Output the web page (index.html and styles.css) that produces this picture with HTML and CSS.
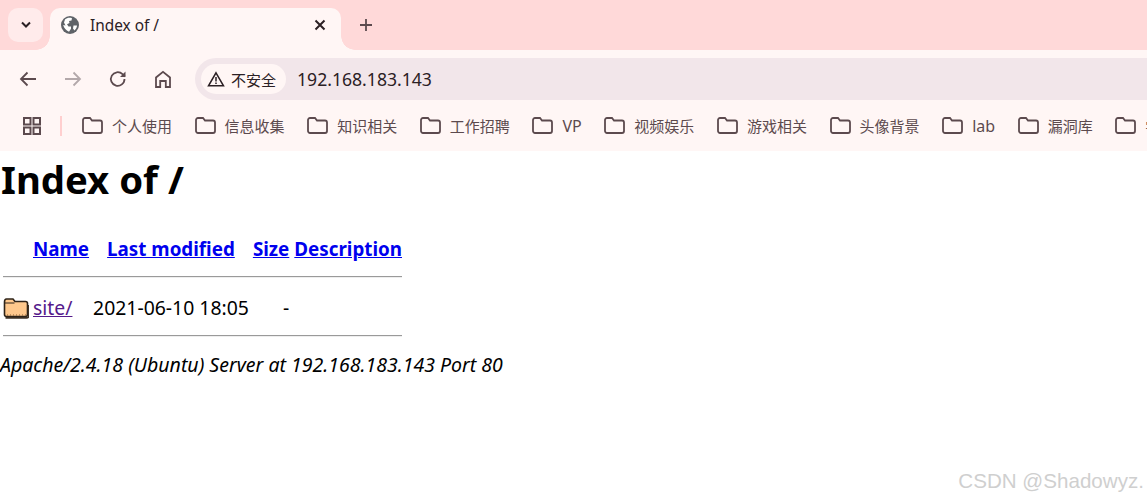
FILE: index.html
```html
<!DOCTYPE html>
<html lang="zh">
<head>
<meta charset="utf-8">
<title>Index of /</title>
<link rel="stylesheet" href="styles.css">
</head>
<body>
<header class="chrome">
  <div class="tabstrip">
    <button class="tabsearch"><svg width="12" height="8" viewBox="0 0 12 8"><path d="M2 1.5 6 5.5 10 1.5" fill="none" stroke="#2b2024" stroke-width="2"/></svg></button>
    <div class="tab">
      <svg class="globe" width="18" height="18" viewBox="0 0 18 18"><circle cx="9" cy="9" r="9" fill="#5f6368"/><path d="M4 3.5C6 1.5 9 1.5 11 2.2L10.5 4.5 8 5 8.5 7 6 8.2 7.5 10.5 10 10.5 10 12.8 8 15.8C5 14.5 3 12 2.2 9L4.5 9.5 3 6.5Z" fill="#fff"/><path d="M12.5 9.5 16 9.5C15.8 11.5 15 13 13.5 14.5L12 12.5Z" fill="#fff"/></svg>
      <span class="tabtitle">Index of /</span>
      <svg class="close" width="12" height="12" viewBox="0 0 12 12"><path d="M1.5 1.5 10.5 10.5M10.5 1.5 1.5 10.5" stroke="#2b2024" stroke-width="2"/></svg>
    </div>
    <svg class="newtab" width="14" height="14" viewBox="0 0 14 14"><path d="M7 1V13M1 7H13" stroke="#5c4a4e" stroke-width="1.8"/></svg>
  </div>
  <div class="toolbar">
    <div class="navs">
      <svg width="24" height="24" viewBox="0 0 24 24"><path d="M20 12H5M11.500 5.500 5 12l6.500 6.500" fill="none" stroke="#5c4a4e" stroke-width="1.800"/></svg>
      <svg width="24" height="24" viewBox="0 0 24 24"><path d="M4 12H19M12.500 5.500 19 12l-6.500 6.500" fill="none" stroke="#b3a8aa" stroke-width="1.800"/></svg>
      <svg width="24" height="24" viewBox="0 0 24 24"><path d="M18.500 12a6.800 6.800 0 1 1-2-4.800L18.800 9.500" fill="none" stroke="#5c4a4e" stroke-width="1.800"/><path d="M19.500 4.500V10H14Z" fill="#5c4a4e"/></svg>
      <svg width="24" height="24" viewBox="0 0 24 24"><path d="M5 20V10.500L12 4.800 19 10.500V20H14.800V14H9.200V20Z" fill="none" stroke="#5c4a4e" stroke-width="1.800"/></svg>
    </div>
    <div class="omnibox">
      <div class="chip">
        <svg width="18" height="16" viewBox="0 0 18 16"><path d="M9 1.800 16.500 14.800H1.500Z" fill="none" stroke="#2b2024" stroke-width="1.500"/><path d="M9 6V10.500M9 11.500V13" stroke="#2b2024" stroke-width="1.500"/></svg>
        <span>不安全</span>
      </div>
      <span class="url">192.168.183.143</span>
    </div>
  </div>
  <nav class="bookmarks">
    <svg class="apps" width="18" height="18" viewBox="0 0 18 18"><path d="M1 1H7.500V7.500H1ZM10.500 1H17V7.500H10.500ZM1 10.500H7.500V17H1ZM10.500 10.500H17V17H10.500Z" fill="none" stroke="#5c4a4e" stroke-width="2"/></svg>
    <span class="sep"></span>
    <a class="bm"><svg class="fold" viewBox="0 0 21 17"><path d="M1 3A2 2 0 0 1 3 1H8L10 3.500H18A2 2 0 0 1 20 5.500V14A2 2 0 0 1 18 16H3A2 2 0 0 1 1 14Z"/></svg>个人使用</a>
    <a class="bm"><svg class="fold" viewBox="0 0 21 17"><path d="M1 3A2 2 0 0 1 3 1H8L10 3.500H18A2 2 0 0 1 20 5.500V14A2 2 0 0 1 18 16H3A2 2 0 0 1 1 14Z"/></svg>信息收集</a>
    <a class="bm"><svg class="fold" viewBox="0 0 21 17"><path d="M1 3A2 2 0 0 1 3 1H8L10 3.500H18A2 2 0 0 1 20 5.500V14A2 2 0 0 1 18 16H3A2 2 0 0 1 1 14Z"/></svg>知识相关</a>
    <a class="bm"><svg class="fold" viewBox="0 0 21 17"><path d="M1 3A2 2 0 0 1 3 1H8L10 3.500H18A2 2 0 0 1 20 5.500V14A2 2 0 0 1 18 16H3A2 2 0 0 1 1 14Z"/></svg>工作招聘</a>
    <a class="bm"><svg class="fold" viewBox="0 0 21 17"><path d="M1 3A2 2 0 0 1 3 1H8L10 3.500H18A2 2 0 0 1 20 5.500V14A2 2 0 0 1 18 16H3A2 2 0 0 1 1 14Z"/></svg><span class="latin">VP</span></a>
    <a class="bm"><svg class="fold" viewBox="0 0 21 17"><path d="M1 3A2 2 0 0 1 3 1H8L10 3.500H18A2 2 0 0 1 20 5.500V14A2 2 0 0 1 18 16H3A2 2 0 0 1 1 14Z"/></svg>视频娱乐</a>
    <a class="bm"><svg class="fold" viewBox="0 0 21 17"><path d="M1 3A2 2 0 0 1 3 1H8L10 3.500H18A2 2 0 0 1 20 5.500V14A2 2 0 0 1 18 16H3A2 2 0 0 1 1 14Z"/></svg>游戏相关</a>
    <a class="bm"><svg class="fold" viewBox="0 0 21 17"><path d="M1 3A2 2 0 0 1 3 1H8L10 3.500H18A2 2 0 0 1 20 5.500V14A2 2 0 0 1 18 16H3A2 2 0 0 1 1 14Z"/></svg>头像背景</a>
    <a class="bm"><svg class="fold" viewBox="0 0 21 17"><path d="M1 3A2 2 0 0 1 3 1H8L10 3.500H18A2 2 0 0 1 20 5.500V14A2 2 0 0 1 18 16H3A2 2 0 0 1 1 14Z"/></svg><span class="latin">lab</span></a>
    <a class="bm"><svg class="fold" viewBox="0 0 21 17"><path d="M1 3A2 2 0 0 1 3 1H8L10 3.500H18A2 2 0 0 1 20 5.500V14A2 2 0 0 1 18 16H3A2 2 0 0 1 1 14Z"/></svg>漏洞库</a>
    <a class="bm"><svg class="fold" viewBox="0 0 21 17"><path d="M1 3A2 2 0 0 1 3 1H8L10 3.500H18A2 2 0 0 1 20 5.500V14A2 2 0 0 1 18 16H3A2 2 0 0 1 1 14Z"/></svg>学习</a>
  </nav>
</header>
<main class="page">
  <h1>Index of /</h1>
  <table class="listing">
    <tr class="heads">
      <th class="c-icon"></th>
      <th class="c-name"><a href="#n">Name</a></th>
      <th class="c-date"><a href="#m">Last modified</a></th>
      <th class="c-size"><a href="#s">Size</a></th>
      <th class="c-desc"><a href="#d">Description</a></th>
    </tr>
    <tr><th colspan="5" class="rule"><hr></th></tr>
    <tr class="entry">
      <td class="c-icon"><svg class="dir" width="26" height="22" viewBox="0 0 26 22"><path d="M1.500 5V17.500Q1.500 19.500 3.500 19.500H22.500Q24.500 19.500 24.500 17.500V6.500Q24.500 4.500 22.500 4.500H12L10 2H3.500Q1.500 2 1.500 5Z" fill="#ffc88c" stroke="#2e2318" stroke-width="1.600"/><path d="M2 6H11.500" fill="none" stroke="#2e2318" stroke-width="1"/><path d="M2.500 20.800H23.500Q25.800 20.800 25.800 18.500V8" fill="none" stroke="#3d3024" stroke-width="1.800"/><path d="M4 18H23" stroke="#8a5f33" stroke-width="1" stroke-dasharray="1 2"/></svg></td>
      <td class="c-name"><a class="visited" href="#site">site/</a></td>
      <td class="c-date">2021-06-10 18:05</td>
      <td class="c-size">-</td>
      <td class="c-desc"></td>
    </tr>
    <tr><th colspan="5" class="rule"><hr></th></tr>
  </table>
  <address>Apache/2.4.18 (Ubuntu) Server at 192.168.183.143 Port 80</address>
</main>
<div class="watermark">CSDN @Shadowyz.</div>
</body>
</html>
```
FILE: styles.css
```css
html, body { margin: 0; padding: 0; height: 500px; overflow: hidden; background: #fff; }
body { font-family: "Noto Sans", "Noto Sans CJK SC", sans-serif; font-size: 19.4px; color: #000; position: relative; }
svg { display: block; flex: none; }

.chrome { background: #fff6f5; }
.tabstrip { height: 50px; background: #ffd9d9; display: flex; align-items: flex-start; padding: 8px 0 0 8px; box-sizing: border-box; }
.tabsearch { width: 35px; height: 34px; border: 0; padding: 0; border-radius: 10px; background: #ffebeb; display: flex; align-items: center; justify-content: center; }
.tab { position: relative; margin-left: 7px; width: 291px; height: 42px; background: #fff6f5; border-radius: 10px 10px 0 0; display: flex; align-items: center; box-sizing: border-box; padding: 0 15px 8px 11px; }
.tab::before, .tab::after { content: ""; position: absolute; bottom: 0; width: 14px; height: 14px; }
.tab::before { left: -14px; background: radial-gradient(circle at 0 0, transparent 13.500px, #fff6f5 14px); }
.tab::after { right: -14px; background: radial-gradient(circle at 100% 0, transparent 13.500px, #fff6f5 14px); }
.tabtitle { margin-left: 11px; flex: 1; font-size: 15.400px; color: #2b2024; }
.newtab { margin: 10px 0 0 18px; }

.toolbar { height: 50px; display: flex; align-items: flex-start; border-radius: 8px 0 0 0; background: #fff6f5; padding-left: 16px; overflow: hidden; }
.navs { display: flex; gap: 21px; padding-top: 17px; }
.omnibox { margin: 8px 0 0 20px; flex: 1; height: 42px; background: #f2e6ea; border-radius: 21px 0 0 21px; display: flex; align-items: center; padding-left: 6px; }
.chip { width: 85px; height: 30px; box-sizing: border-box; background: #fff6f5; border-radius: 15px; display: flex; align-items: center; padding-left: 6px; gap: 6px; font-size: 15px; color: #2b2024; }
.url { margin-left: 11px; font-size: 17.600px; color: #2b2024; }

.bookmarks { height: 51px; display: flex; align-items: center; padding-left: 23px; white-space: nowrap; overflow: hidden; font-size: 15px; color: #5c4a4e; }
.sep { width: 2px; height: 20px; background: #ffcfcf; margin: 0 20px 0 19px; flex: none; }
.bm { display: flex; align-items: center; gap: 9px; margin-right: 22.600px; flex: none; }
.latin { font-size: 16px; }
.fold { width: 21px; height: 17px; fill: none; stroke: #5c4a4e; stroke-width: 1.800; }

.page h1 { margin: 0; padding: 4px 0 0 1px; font-size: 38.300px; font-weight: 700; line-height: 48px; }
.listing { margin-top: 30px; border-spacing: 2px; border-collapse: separate; }
.listing th, .listing td { padding: 1px; }
.listing a { color: #00e; }
.listing a.visited { color: #551a8b; }
.heads th { font-weight: 700; font-size: 18.800px; }
.c-icon { width: 26px; }
.listing .c-size { padding-right: 2px; }
td.c-name, td.c-date { text-align: left; }
td.c-size { text-align: right; }
.listing .rule { padding: 0 1px; }
.rule hr { margin: 11px 0 13px; border: 0; border-top: 1px solid #9a9a9a; border-bottom: 1px solid #eee; }
.listing tr:last-child .rule hr { margin-bottom: 14px; }
address { font-style: italic; font-size: 19.500px; margin-top: 0; line-height: 24px; }

.watermark { position: absolute; right: 3px; top: 469px; font-family: "Liberation Sans", sans-serif; font-size: 20.600px; color: #cfcfcf; }
```
